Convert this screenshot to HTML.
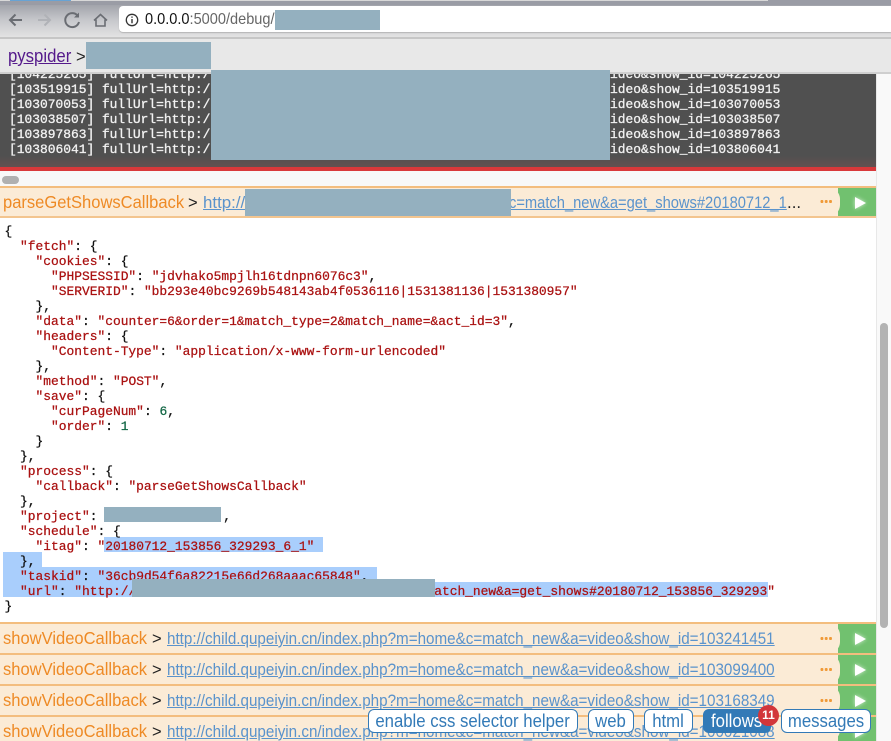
<!DOCTYPE html>
<html><head><meta charset="utf-8">
<style>
*{box-sizing:border-box}
html,body{margin:0;padding:0;width:891px;height:741px;overflow:hidden;background:#fff;font-family:"Liberation Sans",sans-serif}
.a{position:absolute}
.r{position:absolute;background:#94b0bf}
.log{position:absolute;left:9px;color:#f2f2f2;font:12.92px/15px "Liberation Mono",monospace;white-space:pre;-webkit-text-stroke:.3px #f2f2f2}
#json{position:absolute;left:4.500px;top:224px;font:12.92px/15px "Liberation Mono",monospace;white-space:pre;color:#111;-webkit-text-stroke:.25px}
#json b{font-weight:normal;color:#a11}
#json i{font-style:normal;color:#164}
#json u{display:inline-block;text-decoration:none}
.sel{position:absolute;background:#a9cefc}
.row{position:absolute;left:0;width:876px;background:#fbebd6;border-top:2px solid #f3bd7e;overflow:hidden}
.row .cb{position:absolute;left:3px;font-size:17.6px;color:#ee8a25;white-space:pre;transform:scaleX(.94);transform-origin:0 50%}
.row .gt{position:absolute;font-size:16.5px;color:#222}
.row .u{position:absolute;font-size:16.9px;color:#5a93cc;text-decoration:underline;white-space:pre;transform:scaleX(.9);transform-origin:0 50%}
.row .dots{position:absolute;left:820px;width:12px;height:3px;background:radial-gradient(circle at 2px 1.5px,#f09a38 1.5px,transparent 1.6px) 0 0/4.3px 3px repeat-x}
.row .g{position:absolute;left:838px;width:38px;top:0;bottom:0;background:#71c16f}
.row .g2{position:absolute;left:810px;width:30px;top:0;bottom:0;background:#fbebd6;border-radius:0 11px 11px 0}
.row svg{position:absolute;left:853px;filter:drop-shadow(0 0 2px rgba(255,255,255,.7))}
.btn{position:absolute;top:709px;height:24px;border:1px solid #337ab7;border-radius:6px;background:#fff;color:#337ab7;font-size:18px;line-height:23px;text-align:center;white-space:nowrap;overflow:visible}
.btn span{display:inline-block;transform:scaleX(.93);transform-origin:50% 50%;margin:0 -20px}
</style></head><body>

<!-- browser chrome -->
<div class="a" style="left:0;top:0;width:891px;height:6px;background:#9a9ca5"></div>
<div class="a" style="left:0;top:0;width:768px;height:1px;background:#d8d8d8"></div>
<div class="a" style="left:10px;top:0;width:61px;height:1px;background:#68a3d4"></div>
<div class="a" style="left:0;top:5px;width:891px;height:33px;background:linear-gradient(#a2a4ab,#c6c7cb 45%,#e4e4e4)"></div>
<div class="a" style="left:0;top:37px;width:891px;height:2px;background:#c6c6c6"></div>
<div class="a" style="left:119px;top:6px;width:772px;height:26px;background:#fff;border-radius:4px 0 0 4px;box-shadow:0 1px 1px #b5b5b5"></div>
<svg class="a" style="left:0;top:5px" width="120" height="30" fill="none" stroke-width="2">
<path d="M22 15H10M15.500 9.500L10 15l5.500 5.500" stroke="#6a6d73"/>
<path d="M38 15H50M44.500 9.500L50 15l-5.500 5.500" stroke="#b0b2b7"/>
<path d="M77.500 10.500A7 7 0 1 0 79 17" stroke="#6a6d73"/><path d="M79 7.500v5h-5z" fill="#6a6d73"/>
<path d="M94 15.500L100.500 9.500L107 15.500M96 14.500V21H105V14.500" stroke="#6a6d73" stroke-width="1.600"/>
</svg>
<svg class="a" style="left:125px;top:13px" width="14" height="14" fill="none"><circle cx="7" cy="7" r="5.700" stroke="#333" stroke-width="1.300"/><path d="M7 6v4.200M7 3.500v1.300" stroke="#333" stroke-width="1.400"/></svg>
<div class="a" style="left:145px;top:10px;font-size:16px;line-height:20px;color:#666;white-space:pre;transform:scaleX(.91);transform-origin:0 50%"><span style="color:#111">0.0.0.0</span>:5000/debug/</div>
<div class="r" style="left:275px;top:10px;width:105px;height:20px"></div>

<!-- breadcrumb -->
<div class="a" style="left:0;top:39px;width:891px;height:35px;background:#e8e8e8;border-bottom:2px solid #cfcfcf"></div>
<div class="a" style="left:8px;top:45px;font-size:18px;line-height:22px;color:#551a8b;text-decoration:underline;transform:scaleX(.93);transform-origin:0 50%">pyspider</div>
<div class="a" style="left:76px;top:46px;font-size:16.500px;line-height:22px;color:#222">&gt;</div>
<div class="r" style="left:86px;top:42px;width:125px;height:27px"></div>

<!-- log -->
<div class="a" style="left:0;top:74px;width:876px;height:93px;background:linear-gradient(#505050 0,#505050 88%,#635050 100%);overflow:hidden">
<div class="log" style="top:-7px">[104225265] fullUrl=http:/</div>
<div class="log" style="top:-7px;left:610px">ideo&amp;show_id=104225265</div>
<div class="log" style="top:8px">[103519915] fullUrl=http:/</div>
<div class="log" style="top:8px;left:610px">ideo&amp;show_id=103519915</div>
<div class="log" style="top:23px">[103070053] fullUrl=http:/</div>
<div class="log" style="top:23px;left:610px">ideo&amp;show_id=103070053</div>
<div class="log" style="top:38px">[103038507] fullUrl=http:/</div>
<div class="log" style="top:38px;left:610px">ideo&amp;show_id=103038507</div>
<div class="log" style="top:53px">[103897863] fullUrl=http:/</div>
<div class="log" style="top:53px;left:610px">ideo&amp;show_id=103897863</div>
<div class="log" style="top:68px">[103806041] fullUrl=http:/</div>
<div class="log" style="top:68px;left:610px">ideo&amp;show_id=103806041</div>
</div>
<div class="r" style="left:211px;top:70px;width:399px;height:90px"></div>
<div class="a" style="left:0;top:167px;width:876px;height:4px;background:#d9383a"></div>
<div class="a" style="left:0;top:171px;width:876px;height:15px;background:#f8f8f8"></div>
<div class="a" style="left:2px;top:176px;width:17px;height:8px;border-radius:4px;background:#b0b0b0"></div>

<!-- active row -->
<div class="row" style="top:186px;height:32px;border-bottom:2px solid #f3c58f">
<span class="cb" style="top:4px">parseGetShowsCallback</span>
<span class="gt" style="left:188px;top:6px">&gt;</span>
<span class="u" style="left:203px;top:5px;transform:none">http://</span>
<span class="u" style="left:509px;top:5px;transform:scaleX(.87)">c=match_new&amp;a=get_shows#20180712_1</span>
<span class="a" style="left:787px;top:5px;font-size:16.9px;color:#222">...</span>
<div class="g"></div><div class="g2"></div>
<div class="dots" style="top:12px"></div>
<svg width="14" height="14" style="top:8px"><path d="M2 1L13 7 2 13z" fill="#fff"/></svg>
</div>
<div class="r" style="left:245px;top:189px;width:266px;height:27px"></div>

<!-- selection -->
<div class="sel" style="left:104px;top:537px;width:219px;height:15px"></div>
<div class="sel" style="left:3px;top:552px;width:39px;height:15px"></div>
<div class="sel" style="left:3px;top:567px;width:374px;height:15px"></div>
<div class="sel" style="left:3px;top:582px;width:765px;height:15px"></div>

<div id="json">{
  <b>"fetch"</b>: {
    <b>"cookies"</b>: {
      <b>"PHPSESSID"</b>: <b>"jdvhako5mpjlh16tdnpn6076c3"</b>,
      <b>"SERVERID"</b>: <b>"bb293e40bc9269b548143ab4f0536116|1531381136|1531380957"</b>
    },
    <b>"data"</b>: <b>"counter=6&amp;order=1&amp;match_type=2&amp;match_name=&amp;act_id=3"</b>,
    <b>"headers"</b>: {
      <b>"Content-Type"</b>: <b>"application/x-www-form-urlencoded"</b>
    },
    <b>"method"</b>: <b>"POST"</b>,
    <b>"save"</b>: {
      <b>"curPageNum"</b>: <i>6</i>,
      <b>"order"</b>: <i>1</i>
    }
  },
  <b>"process"</b>: {
    <b>"callback"</b>: <b>"parseGetShowsCallback"</b>
  },
  <b>"project"</b>: <u style="width:118px"></u>,
  <b>"schedule"</b>: {
    <b>"itag"</b>: <b>"20180712_153856_329293_6_1"</b>
  },
  <b>"taskid"</b>: <b>"36cb9d54f6a82215e66d268aaac65848"</b>,
  <b>"url"</b>: <b>"http://</b><u style="width:298px"></u><b>atch_new&amp;a=get_shows#20180712_153856_329293"</b>
}</div>
<div class="r" style="left:104px;top:507px;width:117px;height:15px"></div>
<div class="r" style="left:132px;top:579px;width:303px;height:18px"></div>

<!-- rows -->
<div class="row" style="top:622px;height:31px">
<span class="cb" style="top:4px">showVideoCallback</span><span class="gt" style="left:152px;top:6px">&gt;</span>
<span class="u" style="left:167px;top:5px">http://child.qupeiyin.cn/index.php?m=home&amp;c=match_new&amp;a=video&amp;show_id=103241451</span>
<div class="g"></div><div class="g2"></div><div class="dots" style="top:13px"></div>
<svg width="14" height="14" style="top:8px"><path d="M2 1L13 7 2 13z" fill="#fff"/></svg>
</div>
<div class="row" style="top:653px;height:31px">
<span class="cb" style="top:4px">showVideoCallback</span><span class="gt" style="left:152px;top:6px">&gt;</span>
<span class="u" style="left:167px;top:5px">http://child.qupeiyin.cn/index.php?m=home&amp;c=match_new&amp;a=video&amp;show_id=103099400</span>
<div class="g"></div><div class="g2"></div><div class="dots" style="top:13px"></div>
<svg width="14" height="14" style="top:8px"><path d="M2 1L13 7 2 13z" fill="#fff"/></svg>
</div>
<div class="row" style="top:684px;height:31px">
<span class="cb" style="top:4px">showVideoCallback</span><span class="gt" style="left:152px;top:6px">&gt;</span>
<span class="u" style="left:167px;top:5px">http://child.qupeiyin.cn/index.php?m=home&amp;c=match_new&amp;a=video&amp;show_id=103168349</span>
<div class="g"></div><div class="g2"></div><div class="dots" style="top:13px"></div>
<svg width="14" height="14" style="top:8px"><path d="M2 1L13 7 2 13z" fill="#fff"/></svg>
</div>
<div class="row" style="top:715px;height:26px">
<span class="cb" style="top:4px">showVideoCallback</span><span class="gt" style="left:152px;top:6px">&gt;</span>
<span class="u" style="left:167px;top:5px">http://child.qupeiyin.cn/index.php?m=home&amp;c=match_new&amp;a=video&amp;show_id=100021088</span>
<div class="g"></div><div class="g2"></div><div class="dots" style="top:13px"></div>
<svg width="14" height="14" style="top:8px"><path d="M2 1L13 7 2 13z" fill="#fff"/></svg>
</div>

<!-- scrollbar -->
<div class="a" style="left:876px;top:74px;width:15px;height:667px;background:#f9f9f9;border-left:1px solid #e8e8e8"></div>
<div class="a" style="left:880px;top:323px;width:8px;height:305px;border-radius:4px;background:#b3b3b3"></div>

<!-- buttons -->
<div class="btn" style="left:368px;width:210px"><span>enable css selector helper</span></div>
<div class="btn" style="left:588px;width:46px"><span>web</span></div>
<div class="btn" style="left:644px;width:49px"><span>html</span></div>
<div class="btn" style="left:703px;width:68px;background:#337ab7;color:#fff;text-align:left;padding-left:7px"><span style="margin:0;transform-origin:0 50%">follows</span></div>
<div class="a" style="left:758px;top:705px;width:21px;height:21px;border-radius:50%;background:#d2363a;color:#fff;font-size:12px;font-weight:bold;line-height:21px;text-align:center">11</div>
<div class="btn" style="left:781px;width:90px"><span>messages</span></div>
</body></html>
